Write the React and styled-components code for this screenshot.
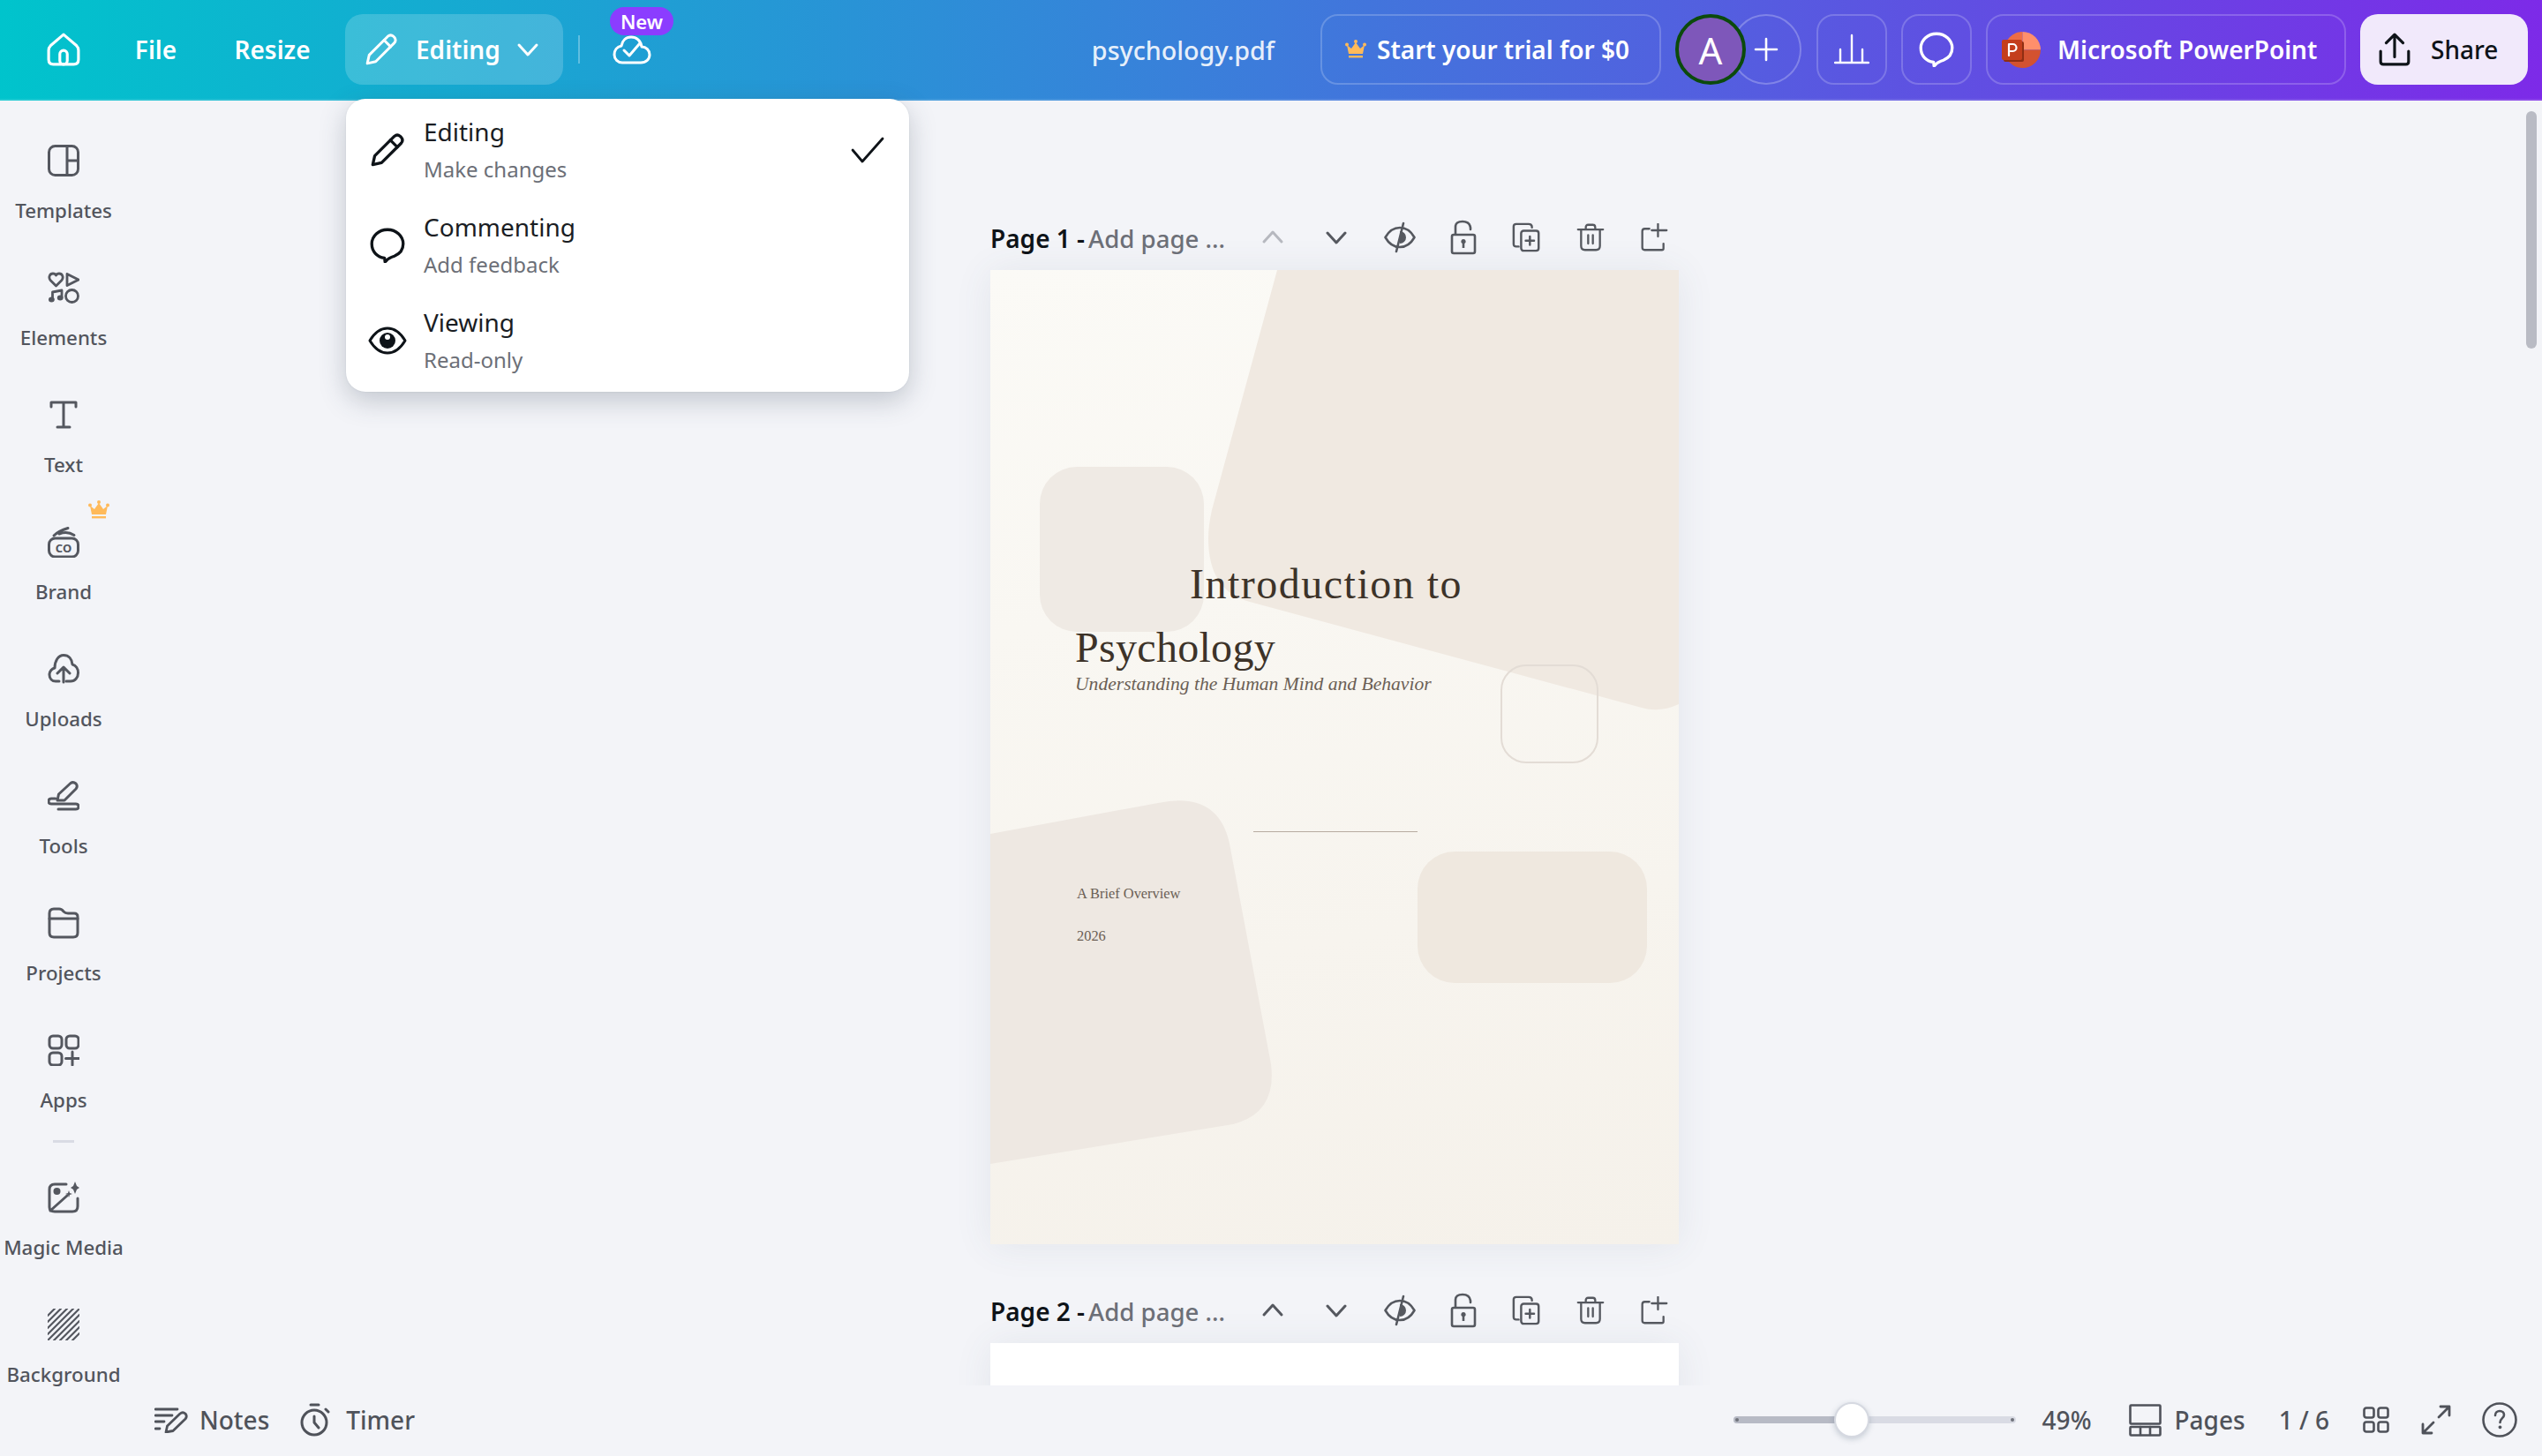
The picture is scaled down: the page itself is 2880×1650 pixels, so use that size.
import React from "react";
import styled, { createGlobalStyle } from "styled-components";

const Global = createGlobalStyle`
  html, body { margin: 0; padding: 0; background: #f3f4f8; }
  * { box-sizing: border-box; }
  body { font-family: "Noto Sans", "Open Sans", Arial, sans-serif; }
`;

const Shell = styled.div`
  position: relative;
  width: 2880px;
  height: 1650px;
  display: flex;
  flex-direction: column;
  overflow: hidden;
  background: #f3f4f8;
`;

const TopBar = styled.header`
  flex: 0 0 114px;
  height: 114px;
  display: flex;
  align-items: flex-start;
  padding: 16px 16px 0 32px;
  color: #fff;
  background: linear-gradient(92deg, #00c4cc 0%, #3d7bdb 50%, #7d2ae8 100%);
  border-bottom: 2px solid rgba(255, 255, 255, 0.12);
`;

const BarItem = styled.div`
  flex: 0 0 ${(p) => p.$w}px;
  width: ${(p) => p.$w}px;
  height: 80px;
  display: flex;
  align-items: center;
  justify-content: center;
  font-size: 28px;
  font-weight: 600;
  margin-left: ${(p) => p.$ml || 0}px;
`;

const EditingButton = styled(BarItem)`
  justify-content: flex-start;
  padding-left: 22px;
  border-radius: 20px;
  background: rgba(255, 255, 255, 0.18);
  span { margin-left: 20px; margin-right: 18px; }
`;

const BarDivider = styled.div`
  width: 2px;
  height: 32px;
  margin: 24px 0 0 17px;
  background: rgba(255, 255, 255, 0.3);
`;

const SyncWrap = styled.div`
  position: relative;
  width: 72px;
  height: 80px;
  margin-left: 34px;
  display: flex;
  align-items: flex-start;
  padding: 24px 0 0 3px;
`;

const NewBadge = styled.div`
  position: absolute;
  left: 0;
  top: -8px;
  width: 72px;
  height: 32px;
  border-radius: 16px;
  background: #8b3dff;
  color: #fff;
  font-size: 22px;
  font-weight: 600;
  line-height: 32px;
  text-align: center;
  z-index: 1;
`;

const RightGroup = styled.div`
  margin-left: auto;
  display: flex;
  align-items: center;
  height: 80px;
`;

const FileName = styled.div`
  font-size: 28.7px;
  font-weight: 500;
  color: rgba(255, 255, 255, 0.9);
  margin-right: 52px;
  white-space: nowrap;
`;

const OutlineButton = styled.div`
  flex: 0 0 ${(p) => p.$w}px;
  width: ${(p) => p.$w}px;
  height: 80px;
  margin-left: ${(p) => p.$ml || 0}px;
  display: flex;
  align-items: center;
  justify-content: ${(p) => (p.$left ? "flex-start" : "center")};
  padding-left: ${(p) => p.$pl || 0}px;
  gap: ${(p) => p.$gap || 0}px;
  border: 2px solid rgba(255, 255, 255, 0.2);
  border-radius: 20px;
  font-size: 28px;
  font-weight: 600;
  white-space: nowrap;
`;

const Avatar = styled.div`
  position: relative;
  z-index: 1;
  width: 80px;
  height: 80px;
  margin-left: 16px;
  border-radius: 50%;
  border: 4px solid #0b4a0c;
  background: #7e57ba;
  display: flex;
  align-items: center;
  justify-content: center;
  font-size: 42px;
  font-weight: 400;
  color: #fff;
`;

const AddPerson = styled.div`
  width: 80px;
  height: 80px;
  margin-left: -17px;
  border-radius: 50%;
  border: 2px solid rgba(255, 255, 255, 0.25);
  display: flex;
  align-items: center;
  justify-content: center;
`;

const ShareButton = styled.div`
  flex: 0 0 190px;
  width: 190px;
  height: 80px;
  margin-left: 16px;
  padding-left: 20px;
  display: flex;
  align-items: center;
  gap: 22px;
  border-radius: 20px;
  background: #f1e9fb;
  color: #0e1318;
  font-size: 28px;
  font-weight: 500;
`;

const Body = styled.div`
  flex: 1;
  min-height: 0;
  display: flex;
`;

const Sidebar = styled.nav`
  flex: 0 0 144px;
  width: 144px;
  padding-top: 14px;
  display: flex;
  flex-direction: column;
`;

const SideItem = styled.div`
  position: relative;
  height: 144px;
  flex: 0 0 144px;
  padding-top: 36px;
  display: flex;
  flex-direction: column;
  align-items: center;
  color: #54575f;
`;

const SideLabel = styled.div`
  margin-top: 24px;
  font-size: 22.3px;
  line-height: 30px;
  font-weight: 500;
  white-space: nowrap;
  color: #52555d;
`;

const SideCrown = styled.div`
  position: absolute;
  left: 100px;
  top: 7px;
  line-height: 0;
`;

const SideDivider = styled.div`
  flex: 0 0 3px;
  width: 24px;
  height: 3px;
  margin: 12px auto 8px;
  background: #d9dbe4;
`;

const Workspace = styled.div`
  flex: 1;
  min-width: 0;
  display: flex;
  flex-direction: column;
`;

const CanvasArea = styled.main`
  flex: 1;
  min-height: 0;
  overflow: hidden;
  display: flex;
  flex-direction: column;
  align-items: center;
  padding-top: 120px;
`;

const PageColumn = styled.div`
  flex: 0 0 auto;
  width: 780px;
  margin-bottom: 40px;
`;

const PageHeader = styled.div`
  position: relative;
  height: 72px;
  display: flex;
  align-items: center;
  font-size: 28px;
  color: #0e1318;
  font-weight: 600;
  white-space: nowrap;
`;

const PageHint = styled.span`
  color: #6c6f77;
  font-size: 27.6px;
  font-weight: 500;
  margin-left: 4px;
`;

const PageActions = styled.div`
  position: absolute;
  left: 284px;
  top: -1px;
  height: 72px;
  display: flex;
  align-items: center;
`;

const PageAction = styled.div`
  width: 72px;
  height: 72px;
  display: flex;
  align-items: center;
  justify-content: center;
  color: ${(p) => (p.$off ? "#b6b8bf" : "#55585f")};
`;

const Sheet = styled.section`
  position: relative;
  width: 780px;
  height: 1104px;
  overflow: hidden;
  background: ${(p) => (p.$blank ? "#ffffff" : "linear-gradient(170deg, #fbfaf6 0%, #f5f1ea 100%)")};
`;

const SheetShadow = styled.div`
  box-shadow: 0 2px 40px rgba(64, 87, 109, 0.09);
`;

const CoverArt = styled.svg`
  position: absolute;
  left: 0;
  top: 0;
  width: 780px;
  height: 1104px;
`;

const CoverTitle = styled.div`
  position: absolute;
  left: ${(p) => p.$x}px;
  top: ${(p) => p.$y}px;
  font-family: "Liberation Serif", "Times New Roman", serif;
  font-size: 48px;
  line-height: 56px;
  letter-spacing: ${(p) => p.$ls}px;
  color: #3d3329;
  white-space: nowrap;
`;

const CoverSubtitle = styled.div`
  position: absolute;
  left: 96px;
  top: 456px;
  font-family: "Liberation Serif", "Times New Roman", serif;
  font-style: italic;
  font-size: 21.6px;
  line-height: 26px;
  color: #6b5f55;
  white-space: nowrap;
`;

const CoverNote = styled.div`
  position: absolute;
  left: 98px;
  top: ${(p) => p.$y}px;
  font-family: "Liberation Serif", "Times New Roman", serif;
  font-size: 16.4px;
  line-height: 18px;
  color: #6b5f55;
  white-space: nowrap;
`;

const Footer = styled.footer`
  flex: 0 0 80px;
  height: 80px;
  display: flex;
  align-items: center;
  padding: 0 28px 2px 31px;
  color: #4f525a;
  font-size: 28px;
  font-weight: 500;
  background: #f3f4f8;
`;

const FooterGroup = styled.div`
  display: flex;
  align-items: center;
  margin-left: ${(p) => p.$ml || 0}px;
  gap: ${(p) => p.$gap || 0}px;
  white-space: nowrap;
`;

const Slider = styled.div`
  position: relative;
  width: 320px;
  height: 8px;
  margin-left: auto;
  border-radius: 4px;
  background: #d9dbe4;
`;

const SliderFill = styled.div`
  height: 8px;
  border-radius: 4px 0 0 4px;
  background: #b7bac5;
`;

const SliderThumb = styled.div`
  position: absolute;
  top: -16px;
  width: 40px;
  height: 40px;
  margin-left: -20px;
  border-radius: 50%;
  background: #fff;
  border: 2px solid #d6d9e1;
  box-shadow: 0 2px 6px rgba(64, 87, 109, 0.25);
`;

const SliderDot = styled.div`
  position: absolute;
  top: 2px;
  ${(p) => (p.$end ? "right: 2px;" : "left: 2px;")}
  width: 4px;
  height: 4px;
  border-radius: 50%;
  background: #6f727b;
`;

const ScrollThumb = styled.div`
  position: absolute;
  left: 2862px;
  top: 126px;
  width: 12px;
  height: 269px;
  border-radius: 6px;
  background: #b9bbc4;
`;

const Menu = styled.div`
  position: absolute;
  left: 392px;
  top: 112px;
  width: 638px;
  height: 332px;
  display: flex;
  flex-direction: column;
  background: #fff;
  border-radius: 22px;
  box-shadow: 0 10px 30px rgba(53, 71, 90, 0.26), 0 0 2px rgba(53, 71, 90, 0.12);
  z-index: 5;
`;

const MenuRow = styled.div`
  flex: 0 0 108px;
  height: 108px;
  display: flex;
  align-items: center;
  padding: 0 28px 0 25px;
  color: #0e1318;
  &:first-child { margin-top: 4px; }
`;

const MenuIcon = styled.div`
  width: 44px;
  flex: 0 0 44px;
  display: flex;
  justify-content: center;
  line-height: 0;
`;

const MenuText = styled.div`
  margin-left: 19px;
  flex: 1;
  padding-bottom: 4px;
`;

const MenuTitle = styled.div`
  font-size: 28px;
  line-height: 40px;
  color: #1a1d23;
`;

const MenuSub = styled.div`
  margin-top: 7px;
  font-size: 24px;
  line-height: 32px;
  color: #6c6f77;
`;

const Glyph = styled.svg`
  display: block;
  flex: 0 0 auto;
  fill: none;
  stroke: currentColor;
  stroke-linecap: round;
  stroke-linejoin: round;
`;

const I = ({ w = 36, h, vb = "0 0 36 36", sw = 3, children }) => (
  <Glyph width={w} height={h || w} viewBox={vb} strokeWidth={sw}>{children}</Glyph>
);

const Filled = (p) => <path fill="currentColor" stroke="none" {...p} />;

const HomeIcon = () => (
  <I w={38}><path d="M18 2 L32 14 Q34 16 34 19 V29 Q34 34 29 34 H7 Q2 34 2 29 V19 Q2 16 4 14 Z" /><rect x="14" y="19" width="8" height="15" rx="4" /></I>
);
const PencilIcon = ({ w = 38, sw = 2.8 }) => (
  <I w={w} sw={sw}><path d="M3 33 L5 24 L25 4 Q28 1.5 31 4 L32 5 Q34.5 8 32 11 L12 31 Z" /><path d="M21 8 L28 15" /></I>
);
const Chevron = ({ up, w = 26, sw = 3 }) => (
  <I w={w} sw={sw} vb="0 0 26 26"><path d={up ? "M3 18 L13 7 L23 18" : "M3 8 L13 19 L23 8"} /></I>
);
const CloudCheck = () => (
  <I w={44} vb="0 0 44 34" h={34}><path d="M11 31 H32 C38 31 42 27 42 22 C42 17 38 13 33 13 C32 6 27 2 21 2 C15 2 11 6 10 12 C5 13 2 17 2 22 C2 27 6 31 11 31 Z" /><path d="M13 17 L19 23 L31 9" /></I>
);
const CrownIcon = ({ w = 24, h = 22 }) => (
  <Glyph width={w} height={h} viewBox="0 0 24 22" style={{ stroke: "none", fill: "#ffba5a" }}>
    <circle cx="2" cy="5.5" r="2" /><circle cx="12" cy="2" r="2" /><circle cx="22" cy="5.5" r="2" />
    <path d="M2 6 L7 10 L12 3 L17 10 L22 6 L20 16 H4 Z" /><rect x="4" y="18" width="16" height="2.4" />
  </Glyph>
);
const BarsIcon = () => (
  <I w={40} sw={2.4} vb="0 0 40 36"><path d="M1 33 H39 M7 33 V18 M20 33 V2 M32 33 V18" /></I>
);
const Bubble = ({ w = 40, sw = 3 }) => (
  <I w={w} sw={sw} vb="0 0 36 36"><path d="M18 2 C27 2 34 8.5 34 16.5 C34 23 30 27 25 29 C22 30 19 31 17 33.5 L15.5 35 L15 31 C7 30 2 24 2 16.5 C2 8.5 9 2 18 2 Z" /></I>
);
const EyeIcon = () => (
  <I w={44} sw={3} vb="0 0 44 36"><path d="M2 18 C8 8 15 4 22 4 C29 4 36 8 42 18 C36 28 29 32 22 32 C15 32 8 28 2 18 Z" /><Filled d="M22 9 a9 9 0 1 1 0 18 a9 9 0 1 1 0 -18 Z" /><circle cx="22" cy="14" r="3" fill="#fff" stroke="none" /></I>
);
const TickIcon = () => (
  <I w={38} sw={2.8} vb="0 0 38 30"><path d="M2 15 L13 28 L36 2" /></I>
);
const PptLogo = () => (
  <Glyph width={44} height={41} viewBox="0 0 44 41" style={{ stroke: "none" }}>
    <path d="M23.5 0 A20.5 20.5 0 0 0 3 20.5 H23.5 Z" fill="#ed6c47" />
    <path d="M23.5 0 A20.5 20.5 0 0 1 44 20.5 H23.5 Z" fill="#ff8f6b" />
    <path d="M3 20.5 A20.5 20.5 0 0 0 44 20.5 Z" fill="#d35230" />
    <rect x="2" y="11" width="23" height="23" rx="2" fill="#8f2e12" />
    <rect x="0" y="9" width="23" height="23" rx="2" fill="#c43e1c" />
    <path d="M8 27 V14 H12.5 A4 4 0 0 1 12.5 22 H8" fill="none" stroke="#fff" strokeWidth="2.2" />
  </Glyph>
);
const ShareIcon = () => (
  <I w={38} sw={3}><path d="M3 20 V31 Q3 34 6 34 H30 Q33 34 33 31 V20" /><path d="M18 26 V3 M9 11 L18 2 L27 11" /></I>
);

const TemplatesIcon = () => (
  <I><rect x="1.5" y="1.5" width="33" height="33" rx="7" /><path d="M22 2 V34 M22 18 H34" /></I>
);
const ElementsIcon = () => (
  <I sw={2.8}>
    <path d="M9.5 16 L3 9.5 C0.5 6 2.5 2 6 2 C7.5 2 9 3 9.5 4 C10 3 11.5 2 13 2 C16.5 2 18.5 6 16 9.5 Z" />
    <path d="M22 2.5 L35 9 L22 15.5 Z" />
    <path d="M5.5 31 V23 L16 21 V29" /><Filled d="M1 31.5 a3.4 3 0 1 1 6.8 0 a3.4 3 0 1 1 -6.8 0Z M10.8 29.5 a3.4 3 0 1 1 6.8 0 a3.4 3 0 1 1 -6.8 0Z" />
    <circle cx="27.5" cy="27.5" r="7" />
  </I>
);
const TextIcon = () => (
  <I><path d="M4 9 V4 H32 V9 M18 4 V32 M11 32 H25" /></I>
);
const BrandGlyphText = styled.text`
  font-family: "Noto Sans", Arial, sans-serif;
  font-size: 13px;
  font-weight: 700;
  fill: currentColor;
  stroke: none;
`;
const BrandIcon = () => (
  <I sw={3}>
    <rect x="1.5" y="14" width="33" height="21" rx="7" />
    <path d="M7 11 C12 6 18 4 23 2.5 M13 9 C19 6.5 24 6.5 30 10.5" />
    <BrandGlyphText x="18" y="29.5" textAnchor="middle">CO</BrandGlyphText>
  </I>
);
const UploadsIcon = () => (
  <I sw={3}><path d="M13 32 H9 C5 32 2 29 2 24.5 C2 20.5 5 17.5 8 17 C8 9 12 2.5 18 2.5 C24 2.5 27.5 7 28 13 C32 14 34.5 18 34.5 22.5 C34.5 28 31 32 26 32 H21" /><path d="M18 33 V17 M11 23 L18 16 L25 23" /></I>
);
const ToolsIcon = () => (
  <I sw={3}><path d="M11 23 L12.5 16 L26 3.5 Q29 1.5 32 4 Q34.5 7 32 10 L19 23 Z" /><path d="M9 21 H4 Q1 21 1 24 Q1 27 4 27 H32 Q35 27 35 30 Q35 33 32 33 H12" /></I>
);
const ProjectsIcon = () => (
  <I sw={3}><path d="M2 12 V7 Q2 2 7 2 H13 Q16 2 18 5 Q20 7 23 7 H30 Q34 7 34 11 V29 Q34 34 29 34 H7 Q2 34 2 29 Z" /><path d="M2 13 H34" /></I>
);
const AppsIcon = () => (
  <I sw={3}><rect x="2" y="2" width="14" height="14" rx="4" /><rect x="21" y="2" width="14" height="14" rx="4" /><rect x="2" y="21" width="14" height="14" rx="4" /><path d="M28 20 V35 M20.5 27.5 H35.5" /></I>
);
const MagicIcon = () => (
  <I sw={3}>
    <path d="M21 3 H8 Q2 3 2 9 V29 Q2 34 8 34 H28 Q34 34 34 28 V19" />
    <path d="M3 33 L22 16" />
    <Filled d="M10.5 7 a4 4 0 1 1 0 8 a4 4 0 1 1 0 -8 Z" />
    <Filled d="M31 0 L33 5 L36 7 L33 9 L31 14 L29 9 L26 7 L29 5 Z" />
    <Filled d="M24 10 L25 13 L28 14 L25 15 L24 18 L23 15 L20 14 L23 13 Z" />
  </I>
);
const BackgroundIcon = () => (
  <I sw={2.2}>
    <path d="M0 8 L8 0 M0 15 L15 0 M0 22 L22 0 M0 29 L29 0 M1 35 L35 1 M7 36 L36 7 M14 36 L36 14 M21 36 L36 21 M28 36 L36 28" />
  </I>
);

const EyeOff = () => (
  <I w={36} sw={2.6} vb="0 0 36 36"><path d="M1.5 18 C6 10 12 7 18 7 C24 7 30 10 34.5 18 C30 26 24 29 18 29 C12 29 6 26 1.5 18 Z" /><Filled d="M18 11 a7 7 0 0 1 0 14 Z" /><path d="M22 2 L14 34" /></I>
);
const LockIcon = () => (
  <I w={36} h={40} sw={2.6} vb="0 0 36 40"><path d="M7 17 H29 Q31 17 31 19 V36 Q31 38 29 38 H7 Q5 38 5 36 V19 Q5 17 7 17 Z" /><path d="M9 16 V8 Q9 2 17 2 Q25 2 26 9 V11" /><Filled d="M18 22 a2.6 2.6 0 0 1 1.3 4.9 V32 H16.7 V26.9 A2.6 2.6 0 0 1 18 22 Z" /></I>
);
const CopyIcon = () => (
  <I w={34} sw={2.6}><path d="M8 29 H5 Q2 29 2 26 V5 Q2 2 5 2 H20 Q24 2 24 6" /><rect x="11" y="10" width="21" height="24" rx="3" /><path d="M21.5 17 V27 M16.5 22 H26.5" /></I>
);
const TrashIcon = () => (
  <I w={32} sw={2.6}><path d="M2 8 H34 M12 8 V5 Q12 2 15 2 H21 Q24 2 24 5 V8 M6 8 V29 Q6 34 11 34 H25 Q30 34 30 29 V8 M15 15 V26 M21 15 V26" /></I>
);
const AddPageIcon = () => (
  <I w={32} sw={2.6}><path d="M12 7 H6 Q3 7 3 10 V31 Q3 34 6 34 H28 Q30 34 30 32 V26" /><path d="M23 1 V17 M15 9 H34" /></I>
);
const NotesIcon = () => (
  <I w={38} h={30} sw={2.8} vb="0 0 38 30"><path d="M1 3 H26 M1 10 H20 M1 17 H11 M1 25 H6" /><path d="M13 29 L14.5 22 L29 8 Q32 5.5 35 8 Q37.5 11 35 14 L21 27.5 Z" /></I>
);
const TimerIcon = () => (
  <I w={34} h={38} sw={3} vb="0 0 34 38"><circle cx="16" cy="22" r="14" /><path d="M12 2 H21 M16 15 V22 L21 28 M29 7 L32 10" /></I>
);
const PagesIcon = () => (
  <I w={37} sw={2.6} vb="0 0 37 37"><rect x="1.5" y="1.5" width="34" height="21" rx="1" /><rect x="1.5" y="26" width="34" height="9.5" rx="1" /><path d="M13 26 V35 M24 26 V35" /></I>
);
const GridIcon = () => (
  <I w={30} sw={2.6} vb="0 0 30 30"><rect x="1.5" y="1.5" width="11" height="11" rx="2.5" /><rect x="17.5" y="1.5" width="11" height="11" rx="2.5" /><rect x="1.5" y="17.5" width="11" height="11" rx="2.5" /><rect x="17.5" y="17.5" width="11" height="11" rx="2.5" /></I>
);
const ExpandIcon = () => (
  <I w={34} sw={2.8} vb="0 0 34 34"><path d="M20 14 L32 2 M22 2 H32 V12 M14 20 L2 32 M2 22 V32 H12" /></I>
);
const HelpIcon = () => (
  <I w={40} sw={2.6} vb="0 0 40 40"><circle cx="20" cy="20" r="18.5" /><path d="M15 15 C15 11.5 17.5 10 20 10 C23 10 25 12 25 14.5 C25 18 20.5 18.5 20.5 23" /><Filled d="M20.5 26.5 a1.9 1.9 0 1 1 -.01 0 Z" /></I>
);

const sideItems = [
  ["Templates", TemplatesIcon], ["Elements", ElementsIcon], ["Text", TextIcon], ["Brand", BrandIcon, true],
  ["Uploads", UploadsIcon], ["Tools", ToolsIcon], ["Projects", ProjectsIcon], ["Apps", AppsIcon],
];
const sideExtras = [["Magic Media", MagicIcon], ["Background", BackgroundIcon]];

const SideEntry = ({ label, Icon, crown }) => (
  <SideItem>
    <Icon />
    <SideLabel>{label}</SideLabel>
    {crown && <SideCrown><CrownIcon /></SideCrown>}
  </SideItem>
);

const Header = ({ n, upOff }) => (
  <PageHeader>
    Page {n} -<PageHint>Add page ...</PageHint>
    <PageActions>
      <PageAction $off={upOff}><Chevron up /></PageAction>
      <PageAction><Chevron /></PageAction>
      <PageAction><EyeOff /></PageAction>
      <PageAction><LockIcon /></PageAction>
      <PageAction><CopyIcon /></PageAction>
      <PageAction><TrashIcon /></PageAction>
      <PageAction><AddPageIcon /></PageAction>
    </PageActions>
  </PageHeader>
);

const Cover = () => (
  <Sheet>
    <CoverArt viewBox="0 0 780 1104">
      <path d="M325 0 H780 V492 Q758 502 738 496 L294 376 Q247 364 247 304 Q247 290 251 272 Z" fill="#f0e9e1" />
      <rect x="56" y="223" width="186" height="187" rx="42" fill="#efeae4" />
      <rect x="579" y="448" width="109" height="110" rx="28" fill="none" stroke="#e3dcd5" strokeWidth="2" />
      <rect x="484" y="659" width="260" height="149" rx="42" fill="#efe8df" />
      <path d="M0 639 L190 604 Q258 590 271 650 L318 900 Q325 955 275 968 L0 1013 Z" fill="#eee8e2" />
      <path d="M298 636.5 H484" stroke="#b7aba0" strokeWidth="1" />
    </CoverArt>
    <CoverTitle $x={226} $y={328} $ls={1.5}>Introduction to</CoverTitle>
    <CoverTitle $x={96} $y={400} $ls={0.3}>Psychology</CoverTitle>
    <CoverSubtitle>Understanding the Human Mind and Behavior</CoverSubtitle>
    <CoverNote $y={698}>A Brief Overview</CoverNote>
    <CoverNote $y={746}>2026</CoverNote>
  </Sheet>
);

export default function App() {
  return (
    <Shell>
      <Global />
      <TopBar>
        <BarItem $w={80}><HomeIcon /></BarItem>
        <BarItem $w={129}>File</BarItem>
        <BarItem $w={135}>Resize</BarItem>
        <EditingButton $w={247} $ml={15}>
          <PencilIcon />
          <span>Editing</span>
          <Chevron />
        </EditingButton>
        <BarDivider />
        <SyncWrap>
          <NewBadge>New</NewBadge>
          <CloudCheck />
        </SyncWrap>
        <RightGroup>
          <FileName>psychology.pdf</FileName>
          <OutlineButton $w={386} $left $pl={26} $gap={12}>
            <CrownIcon w={24} h={22} />
            Start your trial for $0
          </OutlineButton>
          <Avatar>A</Avatar>
          <AddPerson><I w={28} sw={2.6} vb="0 0 28 28"><path d="M14 2 V26 M2 14 H26" /></I></AddPerson>
          <OutlineButton $w={80} $ml={17}><BarsIcon /></OutlineButton>
          <OutlineButton $w={80} $ml={16}><Bubble /></OutlineButton>
          <OutlineButton $w={408} $ml={16} $left $pl={16} $gap={19}>
            <PptLogo />
            Microsoft PowerPoint
          </OutlineButton>
          <ShareButton><ShareIcon />Share</ShareButton>
        </RightGroup>
      </TopBar>
      <Body>
        <Sidebar>
          {sideItems.map(([label, Icon, crown]) => (
            <SideEntry key={label} label={label} Icon={Icon} crown={crown} />
          ))}
          <SideDivider />
          {sideExtras.map(([label, Icon]) => (
            <SideEntry key={label} label={label} Icon={Icon} />
          ))}
        </Sidebar>
        <Workspace>
          <CanvasArea>
            <PageColumn>
              <Header n={1} upOff />
              <SheetShadow><Cover /></SheetShadow>
            </PageColumn>
            <PageColumn>
              <Header n={2} />
              <SheetShadow><Sheet $blank /></SheetShadow>
            </PageColumn>
          </CanvasArea>
          <Footer>
            <FooterGroup $gap={13}><NotesIcon />Notes</FooterGroup>
            <FooterGroup $ml={35} $gap={18}><TimerIcon />Timer</FooterGroup>
            <Slider>
              <SliderFill style={{ width: "42%" }} />
              <SliderDot />
              <SliderDot $end />
              <SliderThumb style={{ left: "42%" }} />
            </Slider>
            <FooterGroup $ml={30}>49%</FooterGroup>
            <FooterGroup $ml={43} $gap={14}><PagesIcon />Pages</FooterGroup>
            <FooterGroup $ml={38}>1 / 6</FooterGroup>
            <FooterGroup $ml={38}><GridIcon /></FooterGroup>
            <FooterGroup $ml={36}><ExpandIcon /></FooterGroup>
            <FooterGroup $ml={35}><HelpIcon /></FooterGroup>
          </Footer>
        </Workspace>
      </Body>
      <Menu>
        <MenuRow>
          <MenuIcon><PencilIcon w={40} sw={3} /></MenuIcon>
          <MenuText><MenuTitle>Editing</MenuTitle><MenuSub>Make changes</MenuSub></MenuText>
          <TickIcon />
        </MenuRow>
        <MenuRow>
          <MenuIcon><Bubble /></MenuIcon>
          <MenuText><MenuTitle>Commenting</MenuTitle><MenuSub>Add feedback</MenuSub></MenuText>
        </MenuRow>
        <MenuRow>
          <MenuIcon><EyeIcon /></MenuIcon>
          <MenuText><MenuTitle>Viewing</MenuTitle><MenuSub>Read-only</MenuSub></MenuText>
        </MenuRow>
      </Menu>
      <ScrollThumb />
    </Shell>
  );
}
